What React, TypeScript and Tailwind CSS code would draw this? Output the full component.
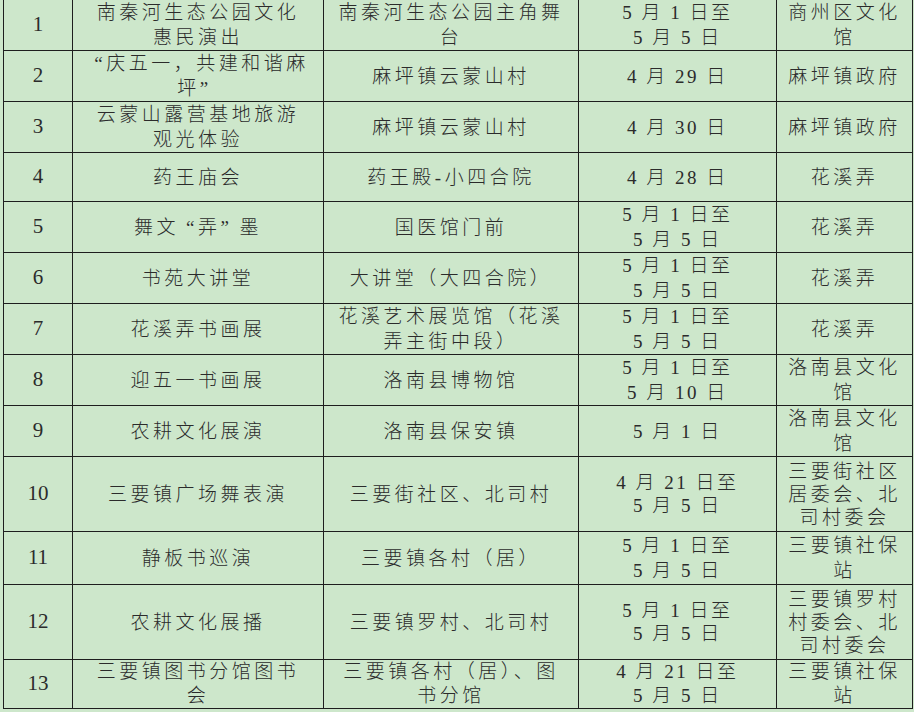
import React from "react";

interface Row {
  n: string;
  h: string;
  lh: string;
  cells: string[][];
}

const rows: Row[] = [
  { n: "1", h: "h-[50px]", lh: "leading-[25px]", cells: [["南秦河生态公园文化", "惠民演出"], ["南秦河生态公园主角舞", "台"], ["5 月 1 日至", "5 月 5 日"], ["商州区文化", "馆"]] },
  { n: "2", h: "h-[50px]", lh: "leading-[25px]", cells: [["“庆五一，共建和谐麻", "坪”"], ["麻坪镇云蒙山村"], ["4 月 29 日"], ["麻坪镇政府"]] },
  { n: "3", h: "h-[50px]", lh: "leading-[25px]", cells: [["云蒙山露营基地旅游", "观光体验"], ["麻坪镇云蒙山村"], ["4 月 30 日"], ["麻坪镇政府"]] },
  { n: "4", h: "h-[49px]", lh: "leading-[25px]", cells: [["药王庙会"], ["药王殿-小四合院"], ["4 月 28 日"], ["花溪弄"]] },
  { n: "5", h: "h-[50px]", lh: "leading-[25px]", cells: [["舞文“弄”墨"], ["国医馆门前"], ["5 月 1 日至", "5 月 5 日"], ["花溪弄"]] },
  { n: "6", h: "h-[50px]", lh: "leading-[25px]", cells: [["书苑大讲堂"], ["大讲堂（大四合院）"], ["5 月 1 日至", "5 月 5 日"], ["花溪弄"]] },
  { n: "7", h: "h-[50px]", lh: "leading-[25px]", cells: [["花溪弄书画展"], ["花溪艺术展览馆（花溪", "弄主街中段）"], ["5 月 1 日至", "5 月 5 日"], ["花溪弄"]] },
  { n: "8", h: "h-[50px]", lh: "leading-[25px]", cells: [["迎五一书画展"], ["洛南县博物馆"], ["5 月 1 日至", "5 月 10 日"], ["洛南县文化", "馆"]] },
  { n: "9", h: "h-[51px]", lh: "leading-[25px]", cells: [["农耕文化展演"], ["洛南县保安镇"], ["5 月 1 日"], ["洛南县文化", "馆"]] },
  { n: "10", h: "h-[75px]", lh: "leading-[23px]", cells: [["三要镇广场舞表演"], ["三要街社区、北司村"], ["4 月 21 日至", "5 月 5 日"], ["三要街社区", "居委会、北", "司村委会"]] },
  { n: "11", h: "h-[53px]", lh: "leading-[25px]", cells: [["静板书巡演"], ["三要镇各村（居）"], ["5 月 1 日至", "5 月 5 日"], ["三要镇社保", "站"]] },
  { n: "12", h: "h-[75px]", lh: "leading-[23px]", cells: [["农耕文化展播"], ["三要镇罗村、北司村"], ["5 月 1 日至", "5 月 5 日"], ["三要镇罗村", "村委会、北", "司村委会"]] },
  { n: "13", h: "h-[49px]", lh: "leading-[24px]", cells: [["三要镇图书分馆图书", "会"], ["三要镇各村（居）、图", "书分馆"], ["4 月 21 日至", "5 月 5 日"], ["三要镇社保", "站"]] },
];

const Line = ({ text }: { text: string }) => {
  const parts = text.split(/([“”])/);
  return (
    <div className="whitespace-nowrap">
      {parts.map((p, i) =>
        p === "“" ? (
          <span key={i} className="inline-block w-[19px] text-right">“</span>
        ) : p === "”" ? (
          <span key={i} className="inline-block w-[19px] text-left">”</span>
        ) : (
          <span key={i}>{p}</span>
        )
      )}
    </div>
  );
};

const App = () => {
  return (
    <div className="w-[914px] h-[712px] overflow-hidden bg-[#cde7cb] pl-[3px]">
      <table
        className="table-fixed border-collapse w-[909px] text-[#2b2b2b]"
        style={{ fontFamily: '"Liberation Serif", "Noto Sans CJK SC", serif' }}
      >
        <colgroup>
          <col className="w-[69px]" />
          <col className="w-[251px]" />
          <col className="w-[255px]" />
          <col className="w-[198px]" />
          <col className="w-[136px]" />
        </colgroup>
        <tbody>
          {rows.map((row) => (
            <tr key={row.n} className={row.h}>
              <td className="border-x border-b border-[#1e1e1e] p-0 text-center align-middle text-[21px]">
                {row.n}
              </td>
              {row.cells.map((lines, ci) => (
                <td
                  key={ci}
                  className={`border-x border-b border-[#1e1e1e] p-0 text-center align-middle text-[19px] font-light ${ci === 2 ? "tracking-[2.5px]" : "tracking-[3.5px]"} ${row.lh}`}
                >
                  {lines.map((l, li) => (
                    <Line key={li} text={l} />
                  ))}
                </td>
              ))}
            </tr>
          ))}
        </tbody>
      </table>
    </div>
  );
};

export default App;
